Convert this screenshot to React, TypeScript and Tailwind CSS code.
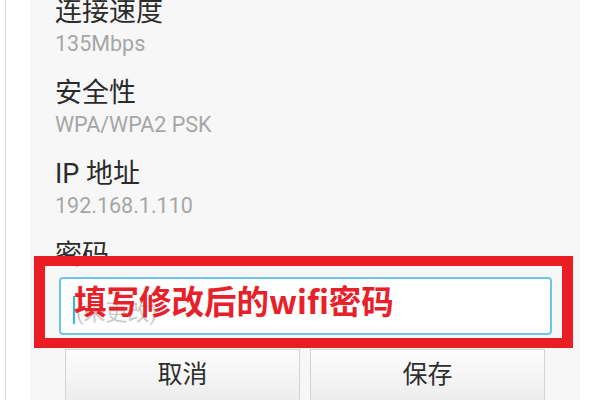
const FONT = "font-['Roboto','Noto_Sans_CJK_SC',sans-serif]";

type Info = { label: string; value: string };

const rows: Info[] = [
  { label: '连接速度', value: '135Mbps' },
  { label: '安全性', value: 'WPA/WPA2 PSK' },
  { label: 'IP 地址', value: '192.168.1.110' },
];

function InfoRow({ label, value }: Info) {
  return (
    <div className="pb-[20px]">
      <div className="h-[32px] text-[27px] leading-[32px] text-[#2b2b2b]">{label}</div>
      <div className="mt-[3px] h-[26px] text-[21.5px] leading-[26px] text-[#a6a6a6]">{value}</div>
    </div>
  );
}

function PasswordField() {
  return (
    <div className="relative mt-[6px] ml-[4px] mr-[3px]">
      {/* the input itself */}
      <div className="relative flex h-[58px] items-center gap-[1px] rounded-[4px] border-2 border-[#6cc6e6] bg-white pl-[12px] pt-[8px]">
        <span className="h-[28px] w-[2px] bg-[#33b5e5]" />
        <span className="mt-[6px] text-[22px] leading-[26px] text-[#c9c9c9]">(未更改)</span>
        {/* annotation written over the field */}
        <span className="absolute left-[13px] top-[5px] whitespace-nowrap font-['Noto_Sans_CJK_SC',sans-serif] text-[32.5px] font-bold leading-[32px] text-[#e8202a]">
          填写修改后的wifi密码
        </span>
      </div>
      {/* red annotation frame */}
      <div className="pointer-events-none absolute -left-[25px] -right-[21px] -top-[21px] -bottom-[13px] border-[10px] border-l-[11px] border-r-[11px] border-[#ea1c24]" />
    </div>
  );
}

function Button({ children }: { children: string }) {
  return (
    <button className="flex h-[52px] flex-1 items-center justify-center border border-[#d4d4d4] bg-gradient-to-b from-[#fdfdfd] to-[#ededed] text-[25px] text-[#2e2e2e]">
      {children}
    </button>
  );
}

export default function App() {
  return (
    <div className={`flex h-[400px] w-[600px] overflow-hidden bg-white ${FONT}`}>
      <div className="ml-[5px] w-px bg-[#d9d9d9]" />
      <div className="ml-[24px] w-[550px] bg-[#f7f7f7] px-[25px]">
        <div className="-mt-[4px]">
          {rows.map((r) => (
            <InfoRow key={r.label} {...r} />
          ))}
          <div className="h-[32px] text-[27px] leading-[32px] text-[#2b2b2b]">密码</div>
        </div>
        <PasswordField />
        <div className="mx-[10px] mt-[14px] flex gap-[10px]">
          <Button>取消</Button>
          <Button>保存</Button>
        </div>
      </div>
    </div>
  );
}
